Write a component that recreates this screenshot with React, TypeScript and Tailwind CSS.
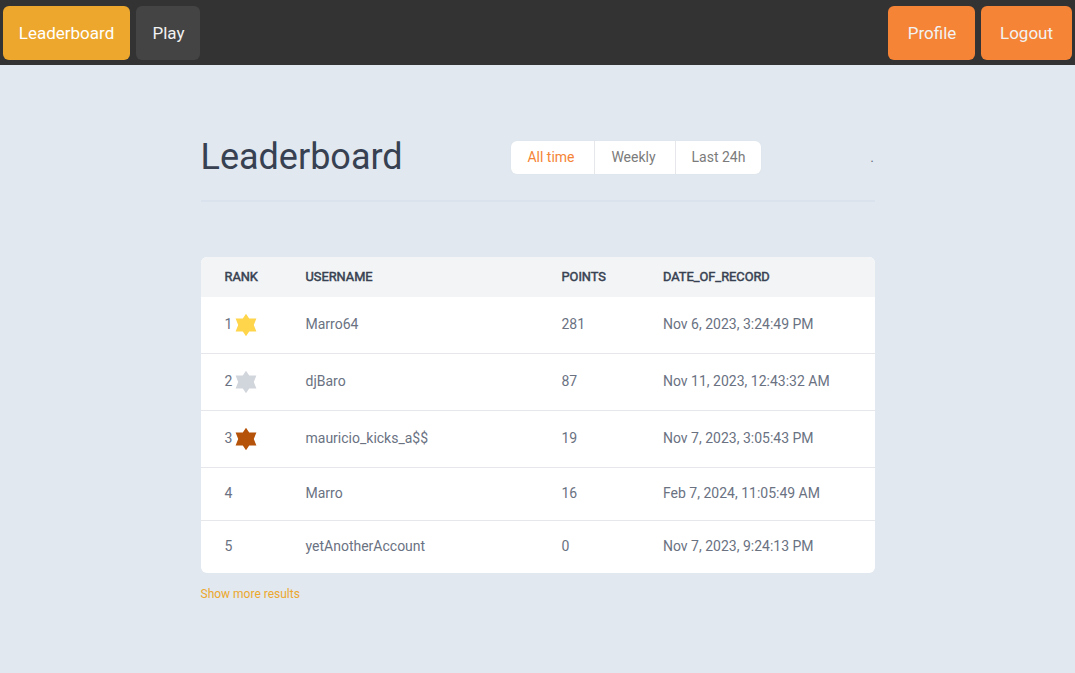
import React from "react";

type Row = {
  rank: number;
  name: string;
  points: number;
  date: string;
  medal?: string;
};

const rows: Row[] = [
  { rank: 1, name: "Marro64", points: 281, date: "Nov 6, 2023, 3:24:49 PM", medal: "text-[#ffd54c]" },
  { rank: 2, name: "djBaro", points: 87, date: "Nov 11, 2023, 12:43:32 AM", medal: "text-gray-300" },
  { rank: 3, name: "mauricio_kicks_a$$", points: 19, date: "Nov 7, 2023, 3:05:43 PM", medal: "text-[#b45309]" },
  { rank: 4, name: "Marro", points: 16, date: "Feb 7, 2024, 11:05:49 AM" },
  { rank: 5, name: "yetAnotherAccount", points: 0, date: "Nov 7, 2023, 9:24:13 PM" },
];

const columns = "grid grid-cols-[81px_256px_101.5px_1fr] items-center pl-[23.5px]";

function Star({ className }: { className: string }) {
  return (
    <svg viewBox="0 0 22 24" className={`ml-[3px] mt-px h-6 w-[22px] ${className}`} fill="currentColor">
      <path d="M11 0.8 L14.2 5.6 L21.4 5.6 L18.8 12 L21.4 18.4 L14.2 18.4 L11 23.2 L7.8 18.4 L0.6 18.4 L3.2 12 L0.6 5.6 L7.8 5.6 Z" />
    </svg>
  );
}

function NavButton({ label, className }: { label: string; className: string }) {
  return (
    <button className={`flex h-[54px] items-center justify-center rounded-md pt-0.5 text-[17px] ${className}`}>
      {label}
    </button>
  );
}

export default function App() {
  return (
    <div className="min-h-screen bg-[#e1e8f0] font-['Roboto',sans-serif]">
      <nav className="flex h-[65px] items-start justify-between bg-[#333333] px-[3px] pt-1.5">
        <div className="flex gap-1.5">
          <NavButton label="Leaderboard" className="w-[127px] bg-[#eca72c] text-white" />
          <NavButton label="Play" className="w-16 bg-[#444444] pl-px text-[#f2f2f2]" />
        </div>
        <div className="flex gap-1.5">
          <NavButton label="Profile" className="w-[87px] bg-[#f58436] pl-px text-[#f2f2f2]" />
          <NavButton label="Logout" className="w-[91px] bg-[#f58436] text-[#f2f2f2]" />
        </div>
      </nav>
      <main className="ml-[200.5px] w-[674.5px] pt-[65px]">
        <header className="flex h-[72px] items-start border-b-2 border-[#dae2ed]">
          <h1 className="w-[310.5px] text-[36px] leading-[54px] text-[#374151]">Leaderboard</h1>
          <div className="mt-[11px] flex h-[33px] divide-x divide-gray-200 rounded-md bg-white text-sm text-[#7b7b7b] shadow-[0_0_2px_rgba(0,0,0,0.04)]">
            <button className="w-[84px] pb-px pr-[3px] text-[#f58436]">All time</button>
            <button className="w-[81px] pb-px pr-[3px]">Weekly</button>
            <button className="w-[85px] pb-px">Last 24h</button>
          </div>
          <span className="ml-auto mr-px mt-[17px] text-sm text-gray-500">.</span>
        </header>
        <section className="ml-[0.5px] mt-[55px] overflow-hidden rounded-md bg-white text-sm text-gray-500">
          <div className={`${columns} h-10 bg-[#f2f4f6] text-[12.8px] leading-5 font-normal text-[#374151] [-webkit-text-stroke:0.5px]`}>
            <span>RANK</span>
            <span>USERNAME</span>
            <span>POINTS</span>
            <span>DATE_OF_RECORD</span>
          </div>
          <div className="divide-y divide-gray-200">
            {rows.map((row) => (
              <div
                key={row.rank}
                className={`${columns} pb-[2px] ${row.medal ? "h-[57px]" : "h-[53px] last:h-[52px]"}`}
              >
                <span className="flex items-center">
                  {row.rank}
                  {row.medal && <Star className={row.medal} />}
                </span>
                <span>{row.name}</span>
                <span>{row.points}</span>
                <span>{row.date}</span>
              </div>
            ))}
          </div>
        </section>
        <button className="mt-[13px] block text-xs text-[#eca72c]">Show more results</button>
      </main>
    </div>
  );
}
